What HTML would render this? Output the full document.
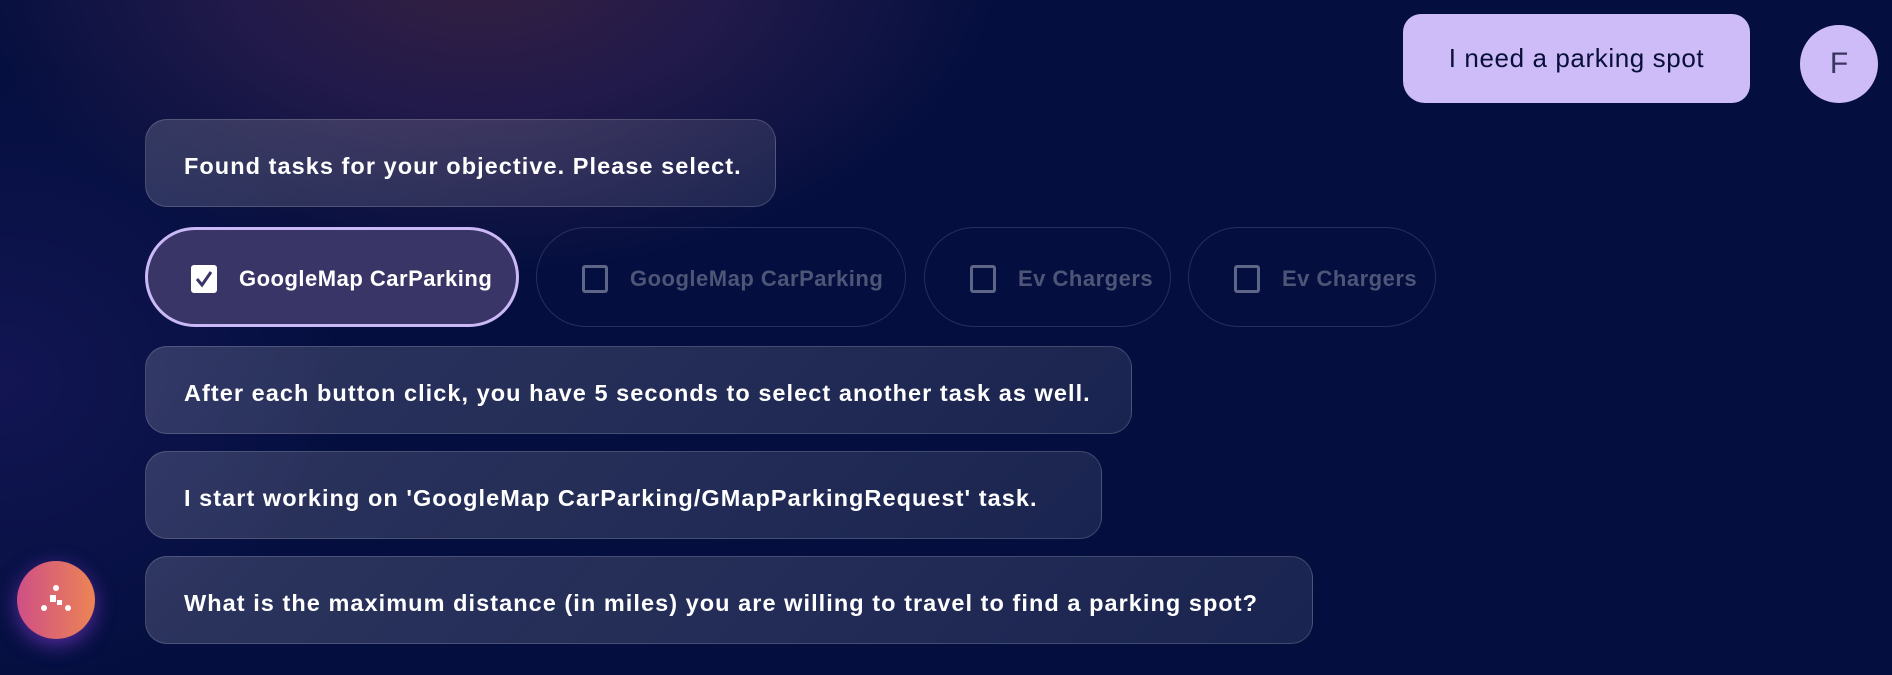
<!DOCTYPE html>
<html><head><meta charset="utf-8"><style>
*{box-sizing:border-box;margin:0;padding:0}
html,body{width:1892px;height:675px;overflow:hidden}
body{position:relative;font-family:"Liberation Sans",sans-serif;
background:radial-gradient(ellipse 700px 420px at 480px -40px,#35203f 0%,#221a4a 35%,rgba(16,18,70,0) 75%),
radial-gradient(ellipse 500px 450px at 0px 380px,#121552 0%,rgba(16,18,70,0) 70%),#040f3f;}
.b{position:absolute;left:145px;height:88px;border-radius:22px;background:linear-gradient(135deg,rgba(255,255,255,.16),rgba(255,255,255,.09));border:1.5px solid rgba(255,255,255,.16);color:#fff;font-size:23.5px;font-weight:bold;display:flex;align-items:center;padding-left:38px;padding-top:6px;letter-spacing:1.05px}
.c{position:absolute;top:227px;height:100px;border-radius:50px;border:1.5px solid rgba(130,140,200,.25);color:#4e5577;font-size:22px;font-weight:bold;display:flex;align-items:center;padding-left:45px;padding-top:3px;letter-spacing:.5px}
.c .k{width:26px;height:28px;border:3px solid #5f6586;border-radius:3px;margin-right:22px}
.c.s{border:3px solid #cbb9f7;background:#393567;color:#fff;padding-left:43px}
.c.s .k{background:#fff;border-color:#fff;position:relative}
</style></head><body>
<div style="position:absolute;left:1403px;top:14px;width:347px;height:89px;border-radius:18px 18px 18px 22px;background:#cdbcf8;color:#0a0f3a;font-size:26px;letter-spacing:.6px;display:flex;align-items:center;justify-content:center;padding-bottom:0px">I need a parking spot</div>
<div style="position:absolute;left:1800px;top:25px;width:78px;height:78px;border-radius:50%;background:#cdbcf8;color:#3a3560;font-size:30px;display:flex;align-items:center;justify-content:center">F</div>
<div class="b" style="top:119px;width:631px">Found tasks for your objective. Please select.</div>
<div class="c s" style="left:145px;width:374px"><span class="k"><svg width="20" height="22" viewBox="0 0 20 22" style="position:absolute;left:0;top:0"><path d="M3 11 L8 17 L17 4" stroke="#393567" stroke-width="3" fill="none"/></svg></span>GoogleMap CarParking</div>
<div class="c" style="left:536px;width:370px">  <span class="k"></span>GoogleMap CarParking</div>
<div class="c" style="left:924px;width:247px"><span class="k"></span>Ev Chargers</div>
<div class="c" style="left:1188px;width:248px"><span class="k"></span>Ev Chargers</div>
<div class="b" style="top:346px;width:987px">After each button click, you have 5 seconds to select another task as well.</div>
<div class="b" style="top:451px;width:957px">I start working on 'GoogleMap CarParking/GMapParkingRequest' task.</div>
<div class="b" style="top:556px;width:1168px">What is the maximum distance (in miles) you are willing to travel to find a parking spot?</div>
<div style="position:absolute;left:17px;top:561px;width:78px;height:78px;border-radius:50%;background:linear-gradient(90deg,#cf4f86,#ec8455);box-shadow:0 6px 20px rgba(140,60,220,.6)">
<svg width="78" height="78" viewBox="0 0 78 78"><circle cx="39" cy="27" r="3" fill="#fff"/><rect x="33" y="34" width="6" height="7" fill="#fff"/><rect x="40" y="39" width="5" height="5" fill="#fff"/><circle cx="27" cy="47" r="3" fill="#fff"/><circle cx="51" cy="47" r="3" fill="#fff"/></svg></div>
</body></html>
